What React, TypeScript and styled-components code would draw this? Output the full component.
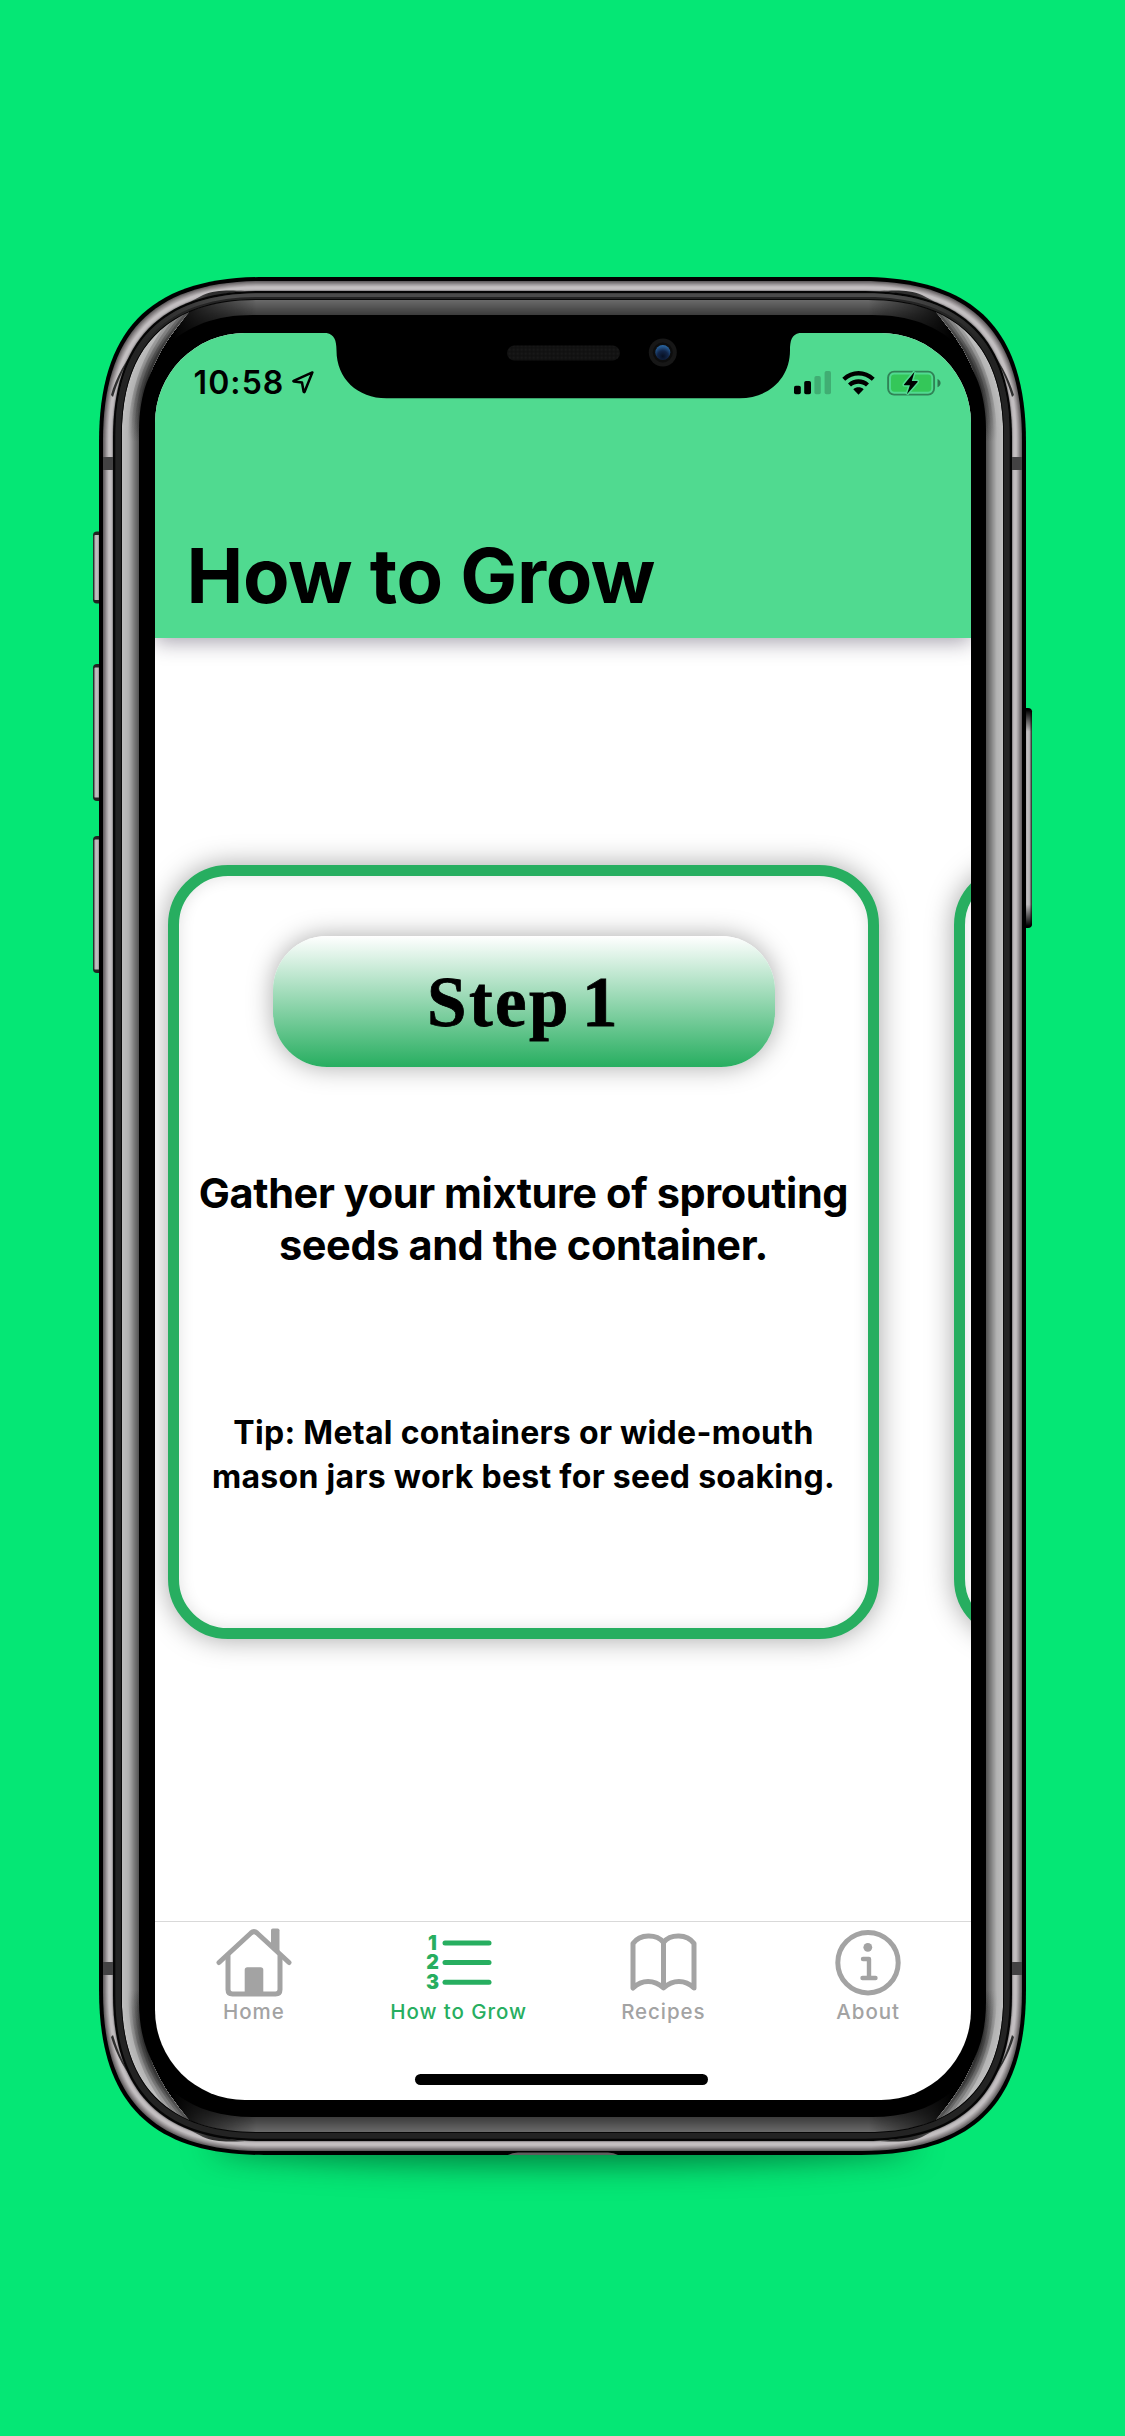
import React from "react";
import styled, { createGlobalStyle } from "styled-components";

const GREEN = "#27ae60";
const GRAY = "#a3a3a3";

const GlobalStyle = createGlobalStyle`
  *, *::before, *::after { box-sizing: border-box; }
  html, body { margin: 0; padding: 0; background: #05e775; }
  body { font-family: Inter, Roboto, "Liberation Sans", sans-serif; color: #000; }
  h1, h2, p { margin: 0; }
`;

const Page = styled.div`
  width: 1125px;
  height: 2436px;
  padding-top: 277px;
  display: flex;
  justify-content: center;
  align-items: flex-start;
  background: #05e775;
  overflow: hidden;
`;

const Phone = styled.div`
  position: relative;
  width: 927px;
  height: 1878px;
  padding: 55.5px;
`;

const FrameArt = styled.svg`
  position: absolute;
  left: -10px;
  top: 0;
  overflow: visible;
`;

const GroundShadow = styled.div`
  position: absolute;
  left: 110px;
  right: 110px;
  bottom: 10px;
  height: 40px;
  border-radius: 50%;
  box-shadow: 0 20px 30px rgba(0, 60, 30, 0.6);
`;

const Screen = styled.div`
  position: relative;
  width: 816px;
  height: 1767px;
  display: flex;
  flex-direction: column;
  border-radius: 90px;
  overflow: hidden;
  background: #fff;
`;

const Header = styled.header`
  position: relative;
  z-index: 1;
  flex: none;
  height: 305.5px;
  padding-bottom: 23.5px;
  display: flex;
  flex-direction: column;
  justify-content: space-between;
  background: #50da90;
  box-shadow: 0 4px 20px rgba(30, 20, 50, 0.4);
`;

const StatusBar = styled.div`
  height: 100px;
  padding: 0 30px 0 39px;
  display: flex;
  align-items: center;
  justify-content: space-between;
`;

const StatusGroup = styled.div<{ $gap: number }>`
  display: flex;
  align-items: center;
  gap: ${(p) => p.$gap}px;
`;

const Time = styled.span`
  font-size: 32px;
  line-height: 40px;
  font-weight: 600;
  letter-spacing: 1.1px;
`;

const Title = styled.h1`
  padding-left: 32px;
  font-size: 76px;
  line-height: 80px;
  font-weight: 700;
  letter-spacing: -0.4px;
  white-space: nowrap;
`;

const Notch = styled.svg`
  position: absolute;
  z-index: 2;
  left: 0;
  top: 0;
`;

const Carousel = styled.main`
  flex: 1;
  min-height: 0;
  padding: 227px 0 0 13.5px;
  display: flex;
  align-items: flex-start;
  gap: 75px;
  overflow: hidden;
`;

const Card = styled.section`
  flex: none;
  width: 711px;
  height: 774px;
  padding-top: 59.5px;
  display: flex;
  flex-direction: column;
  align-items: center;
  border: 11px solid ${GREEN};
  border-radius: 60px;
  background: #fff;
  box-shadow: 0 0 28px rgba(0, 0, 0, 0.36), inset 0 0 16px rgba(0, 0, 0, 0.12);
`;

const StepBadge = styled.h2`
  width: 502px;
  height: 131px;
  padding-top: 2px;
  display: flex;
  align-items: center;
  justify-content: center;
  border-radius: 54px;
  background: linear-gradient(#fff 0%, ${GREEN} 100%);
  box-shadow: 0 0 26px rgba(0, 0, 0, 0.34);
  font-family: "Liberation Serif", serif;
  font-size: 71px;
  line-height: 80px;
  font-weight: 700;
  letter-spacing: 2.4px;
  word-spacing: -9px;
  -webkit-text-stroke: 0.8px #000;
`;

const Copy = styled.p<{ $size: number; $line: number; $top: number; $spacing: number }>`
  margin-top: ${(p) => p.$top}px;
  font-size: ${(p) => p.$size}px;
  line-height: ${(p) => p.$line}px;
  letter-spacing: ${(p) => p.$spacing}px;
  font-weight: 700;
  text-align: center;
  white-space: pre;
`;

const TabBar = styled.nav`
  flex: none;
  height: 179px;
  padding-top: 6px;
  margin-left: -3px;
  display: grid;
  grid-template-columns: repeat(4, 204.75px);
  grid-template-rows: 70px 32px;
  align-content: start;
  border-top: 1.5px solid #d9d9d9;
`;

const Tab = styled.div<{ $active?: boolean }>`
  grid-row: span 2;
  display: grid;
  grid-template-rows: subgrid;
  justify-items: center;
  color: ${(p) => (p.$active ? GREEN : GRAY)};
`;

const TabLabel = styled.span`
  font-size: 20.5px;
  line-height: 28px;
  font-weight: 500;
  letter-spacing: 0.95px;
`;

const HomeIndicator = styled.div`
  position: absolute;
  left: 260.5px;
  bottom: 15px;
  width: 293px;
  height: 10.5px;
  border-radius: 6px;
  background: #000;
`;

/* Rounded outline whose corner starts `len` from the corner, with handles `ctl` from it. */
function ring(d: number): string {
  const w = 927 - 2 * d;
  const h = 1878 - 2 * d;
  const len = 165 - d * 1.3;
  const ctl = 52 - d * 0.24;
  const l = d;
  const t = d;
  const r = d + w;
  const b = d + h;
  return `M${l} ${t + len}C${l} ${t + ctl} ${l + ctl} ${t} ${l + len} ${t}H${r - len}C${r - ctl} ${t} ${r} ${t + ctl} ${r} ${t + len}V${b - len}C${r} ${b - ctl} ${r - ctl} ${b} ${r - len} ${b}H${l + len}C${l + ctl} ${b} ${l} ${b - ctl} ${l} ${b - len}Z`;
}

type Stop = [number, number, number, number];

function mix(stops: Stop[], d: number): string {
  let i = 0;
  while (i < stops.length - 2 && d > stops[i + 1][0]) i++;
  const a = stops[i];
  const b = stops[i + 1];
  const k = Math.max(0, Math.min(1, (d - a[0]) / (b[0] - a[0])));
  const c = [1, 2, 3].map((n) => Math.round(a[n] + (b[n] - a[n]) * k));
  return `rgb(${c.join(",")})`;
}

function Rings({ from, to, step, stops }: { from: number; to: number; step: number; stops: Stop[] }) {
  const out: React.ReactNode[] = [];
  for (let d = from; d < to; d += step) {
    out.push(<path key={d} d={ring(d)} fill={mix(stops, d)} />);
  }
  return <>{out}</>;
}

const METAL: Stop[] = [
  [4, 98, 94, 96],
  [6.5, 146, 141, 143],
  [9.5, 196, 192, 194],
  [12, 192, 188, 190],
  [14, 120, 118, 119],
];
const BEVEL_TOP: Stop[] = [
  [23, 104, 104, 104],
  [38, 58, 58, 58],
];
const BEVEL_SIDE: Stop[] = [
  [23, 190, 190, 190],
  [29, 178, 178, 178],
  [35, 122, 122, 122],
  [40, 78, 78, 78],
];

const TAPER = "M20 939V160C15 100 40 60 84 28L91 34C64 66 40 100 40 165V939Z";
const TAPER_EDGE = "M91 34C64 66 40 100 40 165";
const GLINT = "M12 118C22 84 50 45 104 18C116 13 128 13 146 14C92 18 49 49 28 86C22 96 18 107 14 120Z";

const QUADRANTS = [
  undefined,
  "translate(927 0) scale(-1 1)",
  "translate(0 1878) scale(1 -1)",
  "translate(927 1878) scale(-1 -1)",
];

function PhoneFrame() {
  return (
    <FrameArt width="947" height="1878" viewBox="-10 0 947 1878" aria-hidden="true">
      <defs>
        <linearGradient id="key" x1="0" x2="1" y1="0" y2="0">
          <stop offset="0" stopColor="#3c3c3c" />
          <stop offset=".3" stopColor="#c4c2c3" />
          <stop offset=".65" stopColor="#b8b6b7" />
          <stop offset="1" stopColor="#222" />
        </linearGradient>
        <linearGradient id="keyEnds" x1="0" x2="0" y1="0" y2="1">
          <stop offset="0" stopColor="#000" />
          <stop offset=".1" stopColor="#000" stopOpacity="0" />
          <stop offset=".9" stopColor="#000" stopOpacity="0" />
          <stop offset="1" stopColor="#000" />
        </linearGradient>
        <linearGradient id="fade" gradientUnits="userSpaceOnUse" x1="0" x2="927" y1="0" y2="0">
          <stop offset=".08" stopColor="#000" />
          <stop offset=".17" stopColor="#000" stopOpacity="0" />
          <stop offset=".83" stopColor="#000" stopOpacity="0" />
          <stop offset=".92" stopColor="#000" />
        </linearGradient>
        <linearGradient id="lip" gradientUnits="userSpaceOnUse" x1="0" x2="927" y1="0" y2="0">
          <stop offset=".04" stopColor="#232323" />
          <stop offset=".14" stopColor="#4b4b4b" />
          <stop offset=".86" stopColor="#4b4b4b" />
          <stop offset=".96" stopColor="#232323" />
        </linearGradient>
        <linearGradient id="glint" gradientUnits="userSpaceOnUse" x1="35" x2="47" y1="58" y2="72">
          <stop offset="0" stopColor="#8a8889" />
          <stop offset="1" stopColor="#2e2e2e" />
        </linearGradient>
        <linearGradient id="edgeShade" gradientUnits="userSpaceOnUse" x1="0" x2="0" y1="34" y2="165">
          <stop offset="0" stopColor="#1a1a1a" />
          <stop offset=".6" stopColor="#1a1a1a" />
          <stop offset="1" stopColor="#1a1a1a" stopOpacity="0" />
        </linearGradient>
        <clipPath id="sides">
          <path d={TAPER} />
          <path d={TAPER} transform={QUADRANTS[1]} />
          <path d={TAPER} transform={QUADRANTS[2]} />
          <path d={TAPER} transform={QUADRANTS[3]} />
        </clipPath>
        <clipPath id="upper">
          <path d="M0 0H927V140H0Z" />
        </clipPath>
        <clipPath id="bevelArea">
          <path d={ring(22.8)} />
        </clipPath>
      </defs>

      {[
        [254.5, 72],
        [387, 137],
        [559, 137],
      ].map(([y, h]) => (
        <g key={y}>
          <rect x="-6" y={y} width="12" height={h} rx="4" fill="#222" />
          <rect x="-5.4" y={y + 3.5} width="7" height={h - 7} rx="1.5" fill="url(#key)" />
        </g>
      ))}
      <rect x="921" y="431" width="12" height="220" rx="4" fill="#000" />
      <rect x="925.5" y="433" width="7.5" height="216" rx="1.5" fill="url(#key)" />
      <rect x="925.5" y="433" width="7.5" height="216" rx="1.5" fill="url(#keyEnds)" />

      <path d={ring(0)} fill="#000" />
      <Rings from={4} to={14} step={0.75} stops={METAL} />
      {QUADRANTS.map((t, i) => (
        <path key={i} d={GLINT} transform={t} fill="url(#glint)" />
      ))}
      <rect x="4" y="180" width="11" height="13" fill="#434243" />
      <rect x="912" y="180" width="11" height="13" fill="#434243" />
      <rect x="4" y="1685" width="11" height="13" fill="#434243" />
      <rect x="912" y="1685" width="11" height="13" fill="#434243" />

      <path d={ring(14)} fill="#050505" />
      <path d={ring(16.3)} fill="#232323" />
      <g clipPath="url(#upper)">
        <path d={ring(16.3)} fill="url(#lip)" />
        <path d={ring(20)} fill="#242424" />
      </g>
      <path d={ring(22)} fill="#070707" />
      <Rings from={23} to={38} step={1} stops={BEVEL_TOP} />
      <path d={ring(38)} fill="#000" />
      <path d={ring(22.6)} fill="url(#fade)" />
      <g clipPath="url(#bevelArea)">
        <g clipPath="url(#sides)">
          <Rings from={22.8} to={40} step={1} stops={BEVEL_SIDE} />
          {QUADRANTS.map((t, i) => (
            <g key={i} transform={t} fill="none" stroke="url(#edgeShade)">
              <path d={TAPER_EDGE} strokeWidth="22" opacity=".18" />
              <path d={TAPER_EDGE} strokeWidth="16" opacity=".2" />
              <path d={TAPER_EDGE} strokeWidth="10" opacity=".25" />
              <path d={TAPER_EDGE} strokeWidth="5" opacity=".3" />
            </g>
          ))}
        </g>
      </g>
      <path d={ring(40)} fill="#000" />
      <path d="M409 1878Q413 1875.5 419 1875.5H509Q515 1875.5 519 1878Z" fill="#5e5e5e" />
    </FrameArt>
  );
}

function NotchArt() {
  return (
    <Notch width="816" height="70" viewBox="154.5 332.5 816 70" aria-hidden="true">
      <defs>
        <pattern id="mesh" width="4" height="4" patternUnits="userSpaceOnUse">
          <rect width="4" height="4" fill="#101010" />
          <rect width="2.4" height="2.4" fill="#181818" />
        </pattern>
        <radialGradient id="lens" cx=".5" cy=".75" r=".8">
          <stop offset="0" stopColor="#071022" />
          <stop offset=".45" stopColor="#122548" />
          <stop offset="1" stopColor="#2f74b4" />
        </radialGradient>
      </defs>
      <path
        d="M322 332C333 332.5 336 338 336 350C336 378 357 397.8 386 397.8H739C768 397.8 789.5 378 789.5 350C789.5 338 792 332.5 803 332Z"
        fill="#000"
      />
      <rect x="506.5" y="345" width="113" height="15" rx="7.5" fill="url(#mesh)" />
      <circle cx="662.3" cy="352" r="14" fill="#171717" />
      <circle cx="662.3" cy="352" r="10" fill="#0d0d0d" />
      <circle cx="662.3" cy="352" r="7.5" fill="url(#lens)" />
    </Notch>
  );
}

const LocationIcon = () => (
  <svg width="22" height="23" viewBox="0 0 22 23">
    <path d="M20.4 1.4L1.6 9.9Q1.1 10.4 1.9 10.6L10 11.5L11.6 20.6Q12 21.6 12.6 20.7Z" fill="none" stroke="#000" strokeWidth="2.5" strokeLinejoin="round" />
  </svg>
);

const SignalIcon = () => (
  <svg width="37" height="24" viewBox="0 0 37 24">
    <rect x="0" y="14.7" width="6.8" height="8.6" rx="1.8" />
    <rect x="10.2" y="10" width="6.8" height="13.3" rx="1.8" />
    <rect x="20.4" y="5" width="6.4" height="18.3" rx="1.8" opacity=".2" />
    <rect x="30.6" y="0" width="6.4" height="23.3" rx="1.8" opacity=".2" />
  </svg>
);

const WifiIcon = () => (
  <svg width="33" height="24" viewBox="0 0 33 24">
    <path d="M0.3 6.7C9.5 -2.2 23.5 -2.2 32.7 6.7L29.8 9.7C22.2 2.6 10.8 2.6 3.2 9.7Z" />
    <path d="M6 12.5C12 6.9 21 6.9 27 12.5L24 15.5C19.7 11.7 13.3 11.7 9 15.5Z" />
    <path d="M11.3 18.2C14.3 15.7 18.7 15.7 21.7 18.2L16.5 23.8Z" />
  </svg>
);

const BatteryIcon = () => (
  <svg width="54" height="26" viewBox="0 0 54 26">
    <rect x="1.1" y="1.6" width="46" height="23" rx="6" fill="none" stroke="#000" strokeOpacity=".4" strokeWidth="1.9" />
    <rect x="4" y="4.5" width="40.3" height="17.2" rx="3.4" fill="#34c759" />
    <path d="M50.5 9Q53.6 10.3 53.6 13.1T50.5 17.3Z" opacity=".45" />
    <path d="M27.5 1.8L17 14.4Q16.6 15.2 17.6 15.2H22.9L19.9 24.3L30.6 11.9Q31 11 30 11H24.8Z" stroke="#50da90" strokeWidth="3" />
    <path d="M27.5 1.8L17 14.4Q16.6 15.2 17.6 15.2H22.9L19.9 24.3L30.6 11.9Q31 11 30 11H24.8Z" />
  </svg>
);

const HomeIcon = () => (
  <svg width="76" height="70" viewBox="0 0 76 70" fill="none" stroke="currentColor" strokeWidth="5" strokeLinecap="round" strokeLinejoin="round">
    <path d="M3 34.5L35 5Q38 2.4 41 5L73 34.5" />
    <path d="M12 28V61.5Q12 66 16.5 66H59.5Q64 66 64 61.5V28" />
    <path d="M55 2.3Q55 .5 56.8 .5H61.7Q63.5 .5 63.5 2.3V24.5L55 17Z" fill="currentColor" stroke="none" />
    <path d="M28.7 65V42Q28.7 39.3 31.4 39.3H44.6Q47.3 39.3 47.3 42V65Z" fill="currentColor" stroke="none" />
  </svg>
);

const Digit = styled.text`
  font-family: Inter, sans-serif;
  font-size: 19.5px;
  font-weight: 900;
`;

const ListIcon = () => (
  <svg width="66" height="70" viewBox="0 0 66 70" fill="currentColor">
    {["1", "2", "3"].map((n, i) => (
      <g key={n}>
        <Digit x="6.5" y={21.6 + i * 19.6} textAnchor="middle">{n}</Digit>
        <rect x="16.5" y={12.5 + i * 19.6} width="49" height="5" rx="2.5" />
      </g>
    ))}
  </svg>
);

const BookIcon = () => (
  <svg width="67" height="70" viewBox="0 0 67 70" fill="none" stroke="currentColor" strokeWidth="5" strokeLinejoin="round">
    <path d="M3 60V15.5C10 5.8 26.5 5.8 33.5 14.5C40.5 5.8 57 5.8 64 15.5V60C55 51.3 43 51.3 33.5 60C24 51.3 12 51.3 3 60Z" />
    <path d="M33.5 14V60" />
  </svg>
);

const InfoIcon = () => (
  <svg width="66" height="70" viewBox="0 0 66 70">
    <circle cx="33" cy="34.7" r="30.2" fill="none" stroke="currentColor" strokeWidth="5" />
    <circle cx="32.8" cy="19.3" r="4.4" fill="currentColor" />
    <path d="M28 31H34V50M27.5 50H40.5" fill="none" stroke="currentColor" strokeWidth="4.4" strokeLinecap="round" strokeLinejoin="round" />
  </svg>
);

const TABS = [
  { label: "Home", Icon: HomeIcon },
  { label: "How to Grow", Icon: ListIcon, active: true },
  { label: "Recipes", Icon: BookIcon },
  { label: "About", Icon: InfoIcon },
];

export default function App() {
  return (
    <Page>
      <GlobalStyle />
      <Phone>
        <GroundShadow />
        <PhoneFrame />
        <Screen>
          <Header>
            <StatusBar>
              <StatusGroup $gap={7.5}>
                <Time>10:58</Time>
                <LocationIcon />
              </StatusGroup>
              <StatusGroup $gap={11.5}>
                <SignalIcon />
                <WifiIcon />
                <BatteryIcon />
              </StatusGroup>
            </StatusBar>
            <Title>How to Grow</Title>
          </Header>
          <Carousel>
            <Card>
              <StepBadge>Step 1</StepBadge>
              <Copy $size={41.5} $line={51.5} $top={101.5} $spacing={-0.4}>
                {"Gather your mixture of sprouting\nseeds and the container."}
              </Copy>
              <Copy $size={32} $line={43.8} $top={139.8} $spacing={0.3}>
                {"Tip: Metal containers or wide-mouth\nmason jars work best for seed soaking."}
              </Copy>
            </Card>
            <Card />
          </Carousel>
          <TabBar>
            {TABS.map(({ label, Icon, active }) => (
              <Tab key={label} $active={active}>
                <Icon />
                <TabLabel>{label}</TabLabel>
              </Tab>
            ))}
          </TabBar>
          <NotchArt />
          <HomeIndicator />
        </Screen>
      </Phone>
    </Page>
  );
}
